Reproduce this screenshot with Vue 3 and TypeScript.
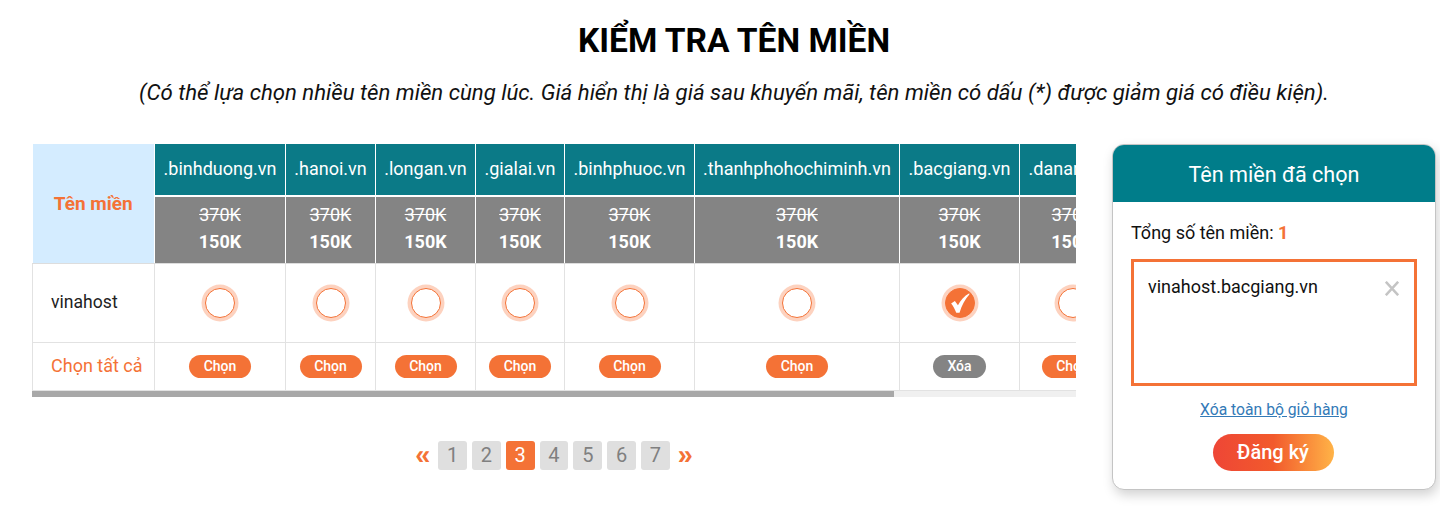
<script setup lang="ts">
interface Domain { name: string; width: number; checked?: boolean }
const domains: Domain[] = [
  { name: '.binhduong.vn', width: 131 },
  { name: '.hanoi.vn', width: 90 },
  { name: '.longan.vn', width: 100 },
  { name: '.gialai.vn', width: 89 },
  { name: '.binhphuoc.vn', width: 130 },
  { name: '.thanhphohochiminh.vn', width: 205 },
  { name: '.bacgiang.vn', width: 120, checked: true },
  { name: '.danang.vn', width: 106 },
  { name: '.vinhlong.vn', width: 171 },
]
const firstWidth = 122
const tableWidth = firstWidth + domains.reduce((s, d) => s + d.width, 0)
const viewport = 1044
const thumb = (viewport / tableWidth) * 100
const pages = [1, 2, 3, 4, 5, 6, 7]
</script>

<template>
  <div class="page">
    <h1 class="title">KIỂM TRA TÊN MIỀN</h1>
    <p class="sub">(Có thể lựa chọn nhiều tên miền cùng lúc. Giá hiển thị là giá sau khuyến mãi, tên miền có dấu (*) được giảm giá có điều kiện).</p>
    <div class="main">
      <div class="left">
        <div class="scroller">
          <table class="tbl" :style="{ width: tableWidth + 'px' }">
            <colgroup>
              <col :style="{ width: firstWidth + 'px' }" />
              <col v-for="d in domains" :key="d.name" :style="{ width: d.width + 'px' }" />
            </colgroup>
            <tbody>
              <tr class="r-name">
                <th rowspan="2" class="corner">Tên miền</th>
                <th v-for="d in domains" :key="d.name" class="dom">{{ d.name }}</th>
              </tr>
              <tr class="r-price">
                <th v-for="d in domains" :key="d.name" class="price">
                  <s>370K</s>
                  <b>150K</b>
                </th>
              </tr>
              <tr class="r-pick">
                <td class="lab">vinahost</td>
                <td v-for="d in domains" :key="d.name">
                  <span class="radio" :class="{ on: d.checked }">
                    <svg v-if="d.checked" viewBox="0 0 30 30" width="29" height="29">
                      <path d="M5.5 16 L9.5 13.5 L12.8 18 C15.5 12.5 19.5 8 25 5 L25 6.5 C20.5 11.5 17 18 14.5 26 L11 26 C9.5 22 7.8 19 5.5 16 Z" fill="#fff" />
                    </svg>
                  </span>
                </td>
              </tr>
              <tr class="r-all">
                <td class="lab all">Chọn tất cả</td>
                <td v-for="d in domains" :key="d.name">
                  <span class="pill" :class="{ del: d.checked }">{{ d.checked ? 'Xóa' : 'Chọn' }}</span>
                </td>
              </tr>
            </tbody>
          </table>
        </div>
        <div class="track"><div class="thumb" :style="{ width: thumb + '%' }"></div></div>
        <div class="pager">
          <span class="arrow">«</span>
          <span v-for="p in pages" :key="p" class="pg" :class="{ cur: p === 3 }">{{ p }}</span>
          <span class="arrow">»</span>
        </div>
      </div>
      <aside class="card">
        <div class="card-head">Tên miền đã chọn</div>
        <div class="card-body">
          <div class="total">Tổng số tên miền: <b>1</b></div>
          <div class="box">
            <span>vinahost.bacgiang.vn</span>
            <svg class="x" viewBox="0 0 14 15" width="14" height="15">
              <path d="M0.8 0.8 L13.2 14.2 M13.2 0.8 L0.8 14.2" stroke="#c4c4c4" stroke-width="2.6" fill="none" />
            </svg>
          </div>
          <a class="clear" href="#">Xóa toàn bộ giỏ hàng</a>
          <button class="reg" type="button">Đăng ký</button>
        </div>
      </aside>
    </div>
  </div>
</template>

<style scoped>
.page {
  box-sizing: border-box;
  width: 1440px;
  height: 517px;
  padding: 0 4px 0 32px;
  font-family: Roboto, sans-serif;
  color: #111;
  background: #fff;
  overflow: hidden;
}
.title {
  margin: 0;
  padding-top: 21px;
  font-size: 33.5px;
  line-height: 40px;
  font-weight: 700;
  text-align: center;
  color: #000;
}
.sub {
  margin: 16px 0 0;
  font-size: 22.2px;
  line-height: 30px;
  font-style: italic;
  text-align: center;
  color: #111;
}
.main {
  display: flex;
  gap: 36px;
  margin-top: 37px;
  align-items: flex-start;
}
.left { width: 1044px; flex: none; }
.scroller { overflow: hidden; width: 1044px; }
.tbl {
  border-collapse: collapse;
  table-layout: fixed;
  text-align: center;
}
.tbl th, .tbl td { padding: 0; }
.corner {
  background: #d4ecff;
  color: #f47236;
  font-size: 19px;
  font-weight: 700;
  padding-bottom: 2px;
  border-bottom: 1px solid #ddd;
}
.r-name { height: 52px; }
.r-price { height: 67px; }
.r-pick { height: 79px; }
.r-all { height: 48px; }
.tbl .dom {
  background: #0b7a87;
  color: #fff;
  font-size: 18px;
  font-weight: 400;
  white-space: nowrap;
  border-left: 1px solid #fff;
  border-bottom: 2px solid #fff;
  padding-bottom: 2px;
}
.tbl .price {
  background: #848484;
  color: #fff;
  font-size: 18px;
  line-height: 27px;
  border-left: 1px solid #fff;
  border-bottom: 1px solid #ddd;
  padding-bottom: 4px;
}
.price s, .price b { display: block; }
.price s { font-weight: 400; }
.price b { font-weight: 700; }
.tbl td {
  border: 1px solid #e2e2e2;
  vertical-align: middle;
}
.tbl .lab {
  box-sizing: border-box;
  text-align: left;
  padding-left: 18px;
  font-size: 17.6px;
  color: #222;
}
.r-pick .lab { padding-bottom: 2px; }
.tbl .all { color: #f47236; font-size: 18px; padding-bottom: 1px; }
.radio {
  box-sizing: border-box;
  display: inline-flex;
  align-items: center;
  justify-content: center;
  width: 30px;
  height: 30px;
  border-radius: 50%;
  border: 1px solid #f47236;
  background: #fff;
  box-shadow: 0 0 0 3.5px #fdd2bf;
  vertical-align: middle;
}
.radio.on { background: #f47236; }
.pill {
  display: inline-block;
  box-sizing: border-box;
  min-width: 62px;
  height: 23px;
  line-height: 23px;
  border-radius: 12px;
  background: #f47236;
  color: #fff;
  font-size: 14px;
  font-weight: 500;
  vertical-align: middle;
}
.pill.del { background: #848484; min-width: 53px; }
.track {
  height: 6px;
  background: #f0f0f0;
}
.thumb { height: 100%; background: #a8a8a8; }
.pager {
  display: flex;
  justify-content: center;
  align-items: center;
  gap: 5px;
  margin-top: 44px;
}
.pg {
  box-sizing: border-box;
  width: 28.8px;
  height: 29px;
  line-height: 29px;
  text-align: center;
  border-radius: 3px;
  background: #dfdfdf;
  color: #808080;
  font-size: 20px;
}
.pg.cur { background: #f47236; color: #fff; }
.arrow {
  font-family: "Liberation Sans", sans-serif;
  color: #f47236;
  font-size: 27px;
  line-height: 29px;
  font-weight: 700;
  width: 17px;
  text-align: center;
  margin: 0 2px;
}
.card {
  box-sizing: border-box;
  width: 324px;
  flex: none;
  height: 346px;
  margin-top: 0;
  border: 1px solid #c4c4c4;
  border-radius: 12px;
  box-shadow: 2px 5px 12px rgba(0, 0, 0, 0.18);
  overflow: hidden;
  background: #fff;
}
.card-head {
  height: 57px;
  line-height: 59px;
  background: #007d8a;
  color: #fff;
  font-size: 21.6px;
  text-align: center;
}
.card-body {
  display: flex;
  flex-direction: column;
  align-items: center;
  padding: 0 18px;
}
.total {
  align-self: stretch;
  margin-top: 20px;
  font-size: 18px;
  line-height: 22px;
  color: #111;
}
.total b { color: #f47236; font-weight: 700; }
.box {
  box-sizing: border-box;
  align-self: stretch;
  height: 127px;
  margin-top: 15px;
  border: 3px solid #f47236;
  padding: 13px 15px 0 14px;
  display: flex;
  justify-content: space-between;
  align-items: flex-start;
  font-size: 18px;
  line-height: 24px;
  color: #111;
}
.x { margin-top: 6px; }
.clear {
  margin-top: 14px;
  font-size: 15.7px;
  line-height: 20px;
  color: #337ab7;
  text-decoration: underline;
}
.reg {
  margin-top: 14px;
  margin-right: 2px;
  width: 121px;
  height: 37px;
  border: 0;
  border-radius: 19px;
  background: linear-gradient(90deg, #ee4636 0%, #f25a2c 50%, #ffb347 100%);
  color: #fff;
  font-family: Roboto, sans-serif;
  font-size: 20px;
  font-weight: 500;
  padding: 0 0 2px;
}
</style>
